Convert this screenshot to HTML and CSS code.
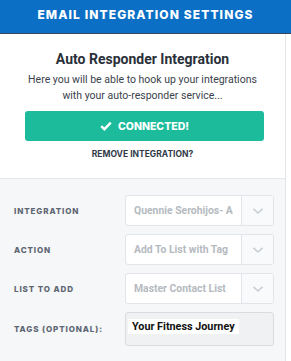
FILE: index.html
```html
<!DOCTYPE html>
<html lang="en">
<head>
  <meta charset="UTF-8" />
  <title>Email Integration Settings</title>
  <link rel="stylesheet" href="styles.css">
</head>
<body>
  <div class="panel">
    <div class="panel-head">EMAIL INTEGRATION SETTINGS</div>

    <div class="intro">
      <h2>Auto Responder Integration</h2>
      <p>Here you will be able to hook up your integrations<br>with your auto-responder service...</p>
      <button class="connected-btn">
        <svg width="12" height="10" viewBox="0 0 12 10"><path d="M1.2 5.2 L4.4 8.2 L10.8 1.6" fill="none" stroke="#fff" stroke-width="2.4"/></svg>
        CONNECTED!
      </button>
      <a class="remove-link" href="#">REMOVE INTEGRATION?</a>
    </div>

    <div class="settings">
      <div class="row">
        <label>INTEGRATION</label>
        <div class="select">
          <span class="value">Quennie Serohijos- Active</span>
          <span class="arrow"><svg width="12" height="8" viewBox="0 0 12 8"><path d="M1.5 1.8 L6 6 L10.5 1.8" fill="none" stroke="#c9ced4" stroke-width="1.6"/></svg></span>
        </div>
      </div>
      <div class="row">
        <label>ACTION</label>
        <div class="select">
          <span class="value">Add To List with Tag</span>
          <span class="arrow"><svg width="12" height="8" viewBox="0 0 12 8"><path d="M1.5 1.8 L6 6 L10.5 1.8" fill="none" stroke="#c9ced4" stroke-width="1.6"/></svg></span>
        </div>
      </div>
      <div class="row">
        <label>LIST TO ADD</label>
        <div class="select">
          <span class="value">Master Contact List</span>
          <span class="arrow"><svg width="12" height="8" viewBox="0 0 12 8"><path d="M1.5 1.8 L6 6 L10.5 1.8" fill="none" stroke="#c9ced4" stroke-width="1.6"/></svg></span>
        </div>
      </div>
      <div class="row tags-row">
        <label>TAGS (OPTIONAL):</label>
        <div class="tags">
          <span class="tag">Your Fitness Journey</span>
        </div>
      </div>
    </div>
  </div>
</body>
</html>
```

FILE: styles.css
```css
body {
  margin: 0;
  background: #fff;
  font-family: Roboto, "Liberation Sans", sans-serif;
}
.panel {
  width: 285px;
  height: 361px;
  border-right: 1px solid #e3e5e8;
}
.panel-head {
  width: 291px;
  height: 34px;
  line-height: 29px;
  background: #0b6fc6;
  border-bottom: 1px solid #3b4756;
  box-sizing: border-box;
  color: #fff;
  font-family: Inter, sans-serif;
  font-weight: 800;
  font-size: 12px;
  letter-spacing: 1.1px;
  text-align: center;
}
.intro {
  height: 145px;
  padding-top: 17px;
  box-sizing: border-box;
  border-bottom: 1px solid #e4e6e9;
  text-align: center;
}
.intro h2 {
  margin: 0;
  font-size: 14px;
  font-weight: 700;
  color: #2a3039;
  line-height: 17px;
}
.intro p {
  margin: 4px 0 0;
  font-size: 10.5px;
  line-height: 16px;
  color: #3a424c;
}
.connected-btn {
  display: flex;
  align-items: center;
  justify-content: center;
  gap: 6px;
  width: 239px;
  height: 30px;
  margin: 7px 0 0 25px;
  border: none;
  border-radius: 3px;
  background: #1cbb9b;
  color: #fff;
  font-family: Inter, sans-serif;
  font-weight: 800;
  font-size: 10.5px;
}
.remove-link {
  display: block;
  margin-top: 8px;
  font-family: Inter, sans-serif;
  font-size: 8.5px;
  font-weight: 700;
  color: #2f3a48;
  text-decoration: none;
}
.settings {
  height: 182px;
  padding-top: 16px;
  background: #f6f7f8;
}
.row {
  display: flex;
  align-items: center;
  height: 31px;
  margin-bottom: 8px;
}
.row label {
  width: 111px;
  padding-left: 14px;
  font-family: Inter, sans-serif;
  font-size: 8px;
  font-weight: 800;
  letter-spacing: 0.9px;
  color: #5d6673;
}
.select {
  display: flex;
  width: 149px;
  height: 31px;
  box-sizing: border-box;
  border: 1px solid #e1e4e8;
  border-radius: 3px;
  background: #fff;
  overflow: hidden;
}
.select .value {
  width: 101px;
  margin-right: 8px;
  padding-left: 8px;
  line-height: 29px;
  font-size: 10.4px;
  font-weight: 700;
  color: #b5bac0;
  white-space: nowrap;
  overflow: hidden;
}
.select .arrow {
  width: 31px;
  border-left: 1px solid #e1e4e8;
  background: #f9fafb;
  display: flex;
  align-items: center;
  justify-content: center;
}
.tags-row {
  height: 34px;
}
.tags {
  width: 149px;
  height: 34px;
  box-sizing: border-box;
  border: 1px solid #d9dce0;
  border-radius: 3px;
  background: #f0f1f2;
  padding: 2px 0 0 2px;
}
.tag {
  display: inline-block;
  background: #fff;
  padding: 0 4px;
  font-size: 10.8px;
  font-weight: 700;
  color: #111;
  line-height: 15px;
}
```
